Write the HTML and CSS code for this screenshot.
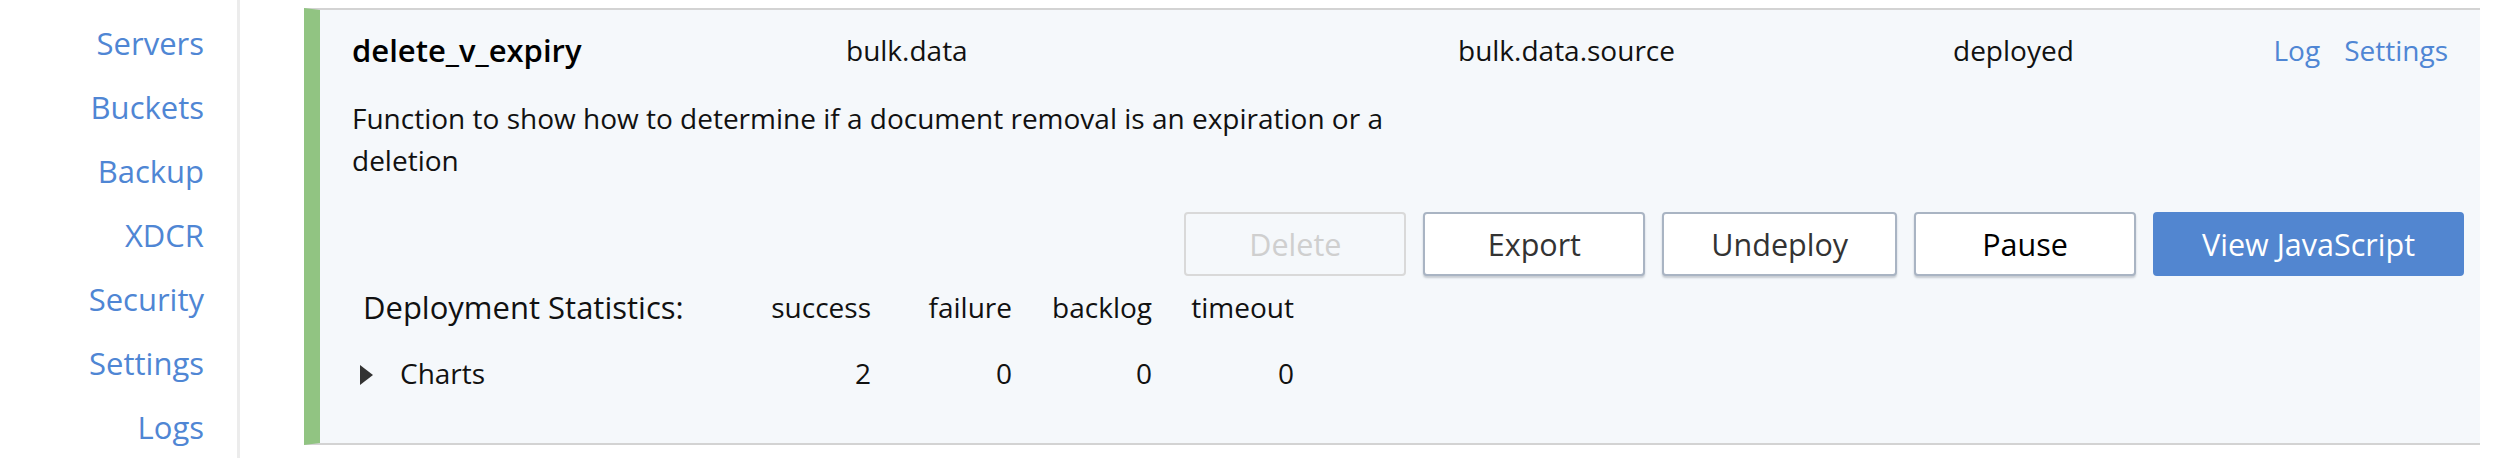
FILE: index.html
```html
<!DOCTYPE html>
<html lang="en">
<head>
<meta charset="utf-8">
<title>Eventing</title>
<link rel="stylesheet" href="styles.css">
</head>
<body>
<div class="app">
  <nav class="sidebar">
    <a class="nav-link" href="#">Servers</a>
    <a class="nav-link" href="#">Buckets</a>
    <a class="nav-link" href="#">Backup</a>
    <a class="nav-link" href="#">XDCR</a>
    <a class="nav-link" href="#">Security</a>
    <a class="nav-link" href="#">Settings</a>
    <a class="nav-link" href="#">Logs</a>
  </nav>
  <main class="main">
    <section class="card">
      <div class="card-head">
        <span class="fn-name">delete_v_expiry</span>
        <span class="cell">bulk.data</span>
        <span class="cell">bulk.data.source</span>
        <span class="cell">deployed</span>
        <span class="links"><a href="#">Log</a><a href="#">Settings</a></span>
      </div>
      <p class="desc">Function to show how to determine if a document removal is an expiration or a deletion</p>
      <div class="actions">
        <button class="btn btn-disabled" disabled>Delete</button>
        <button class="btn">Export</button>
        <button class="btn">Undeploy</button>
        <button class="btn btn-dark">Pause</button>
        <button class="btn btn-primary">View JavaScript</button>
      </div>
      <div class="stats">
        <span class="stats-label">Deployment Statistics:</span>
        <span class="num">success</span>
        <span class="num">failure</span>
        <span class="num">backlog</span>
        <span class="num">timeout</span>
        <span class="charts"><span class="caret"></span>Charts</span>
        <span class="num">2</span>
        <span class="num">0</span>
        <span class="num">0</span>
        <span class="num">0</span>
      </div>
    </section>
  </main>
</div>
</body>
</html>
```
FILE: styles.css
```css
* { box-sizing: border-box; }
html, body { margin: 0; padding: 0; background: #fff; }
body {
  font-family: "Open Sans", "Noto Sans", sans-serif;
  color: #111;
  width: 2512px;
  height: 458px;
  overflow: hidden;
}
.app {
  display: flex;
  height: 458px;
}
.sidebar {
  width: 240px;
  flex: none;
  border-right: 3px solid #ececec;
  display: flex;
  flex-direction: column;
  align-items: flex-end;
  padding: 11px 33px 0 0;
}
.nav-link {
  font-size: 31px;
  line-height: 64px;
  color: #4f86d4;
  text-decoration: none;
}
.main {
  flex: 1;
  padding: 8px 32px 0 64px;
}
.card {
  background: #f5f8fb;
  border-top: 2px solid #d3d3d3;
  border-bottom: 2px solid #d3d3d3;
  border-left: 16px solid #91c482;
  padding: 22px 16px 39px 32px;
}
.card-head {
  display: grid;
  grid-template-columns: 494px 612px 495px 1fr auto;
  align-items: center;
  font-size: 28px;
  line-height: 36px;
  padding-right: 16px;
}
.fn-name { font-size: 31px; font-weight: 600; color: #000; }
.links { display: flex; gap: 24px; }
.links a { color: #4f86d4; text-decoration: none; }
.desc {
  margin: 29px 0 0;
  width: 1106px;
  font-size: 28px;
  line-height: 42px;
}
.actions {
  display: flex;
  justify-content: flex-end;
  gap: 17px;
  margin-top: 31px;
}
.btn {
  font-family: inherit;
  font-size: 30.5px;
  height: 64px;
  min-width: 222px;
  padding: 0 47px;
  border: 2px solid #a9b4c3;
  border-radius: 4px;
  background: #fff;
  color: #333;
  box-shadow: 0 2px 2px rgba(60, 70, 90, 0.25);
}
.btn-dark { color: #000; }
.btn-disabled {
  background: transparent;
  border-color: #d9d9d9;
  color: #cfcfcf;
  box-shadow: none;
}
.btn-primary {
  background: #5286d0;
  border-color: #5286d0;
  color: #fff;
  box-shadow: none;
}
.stats {
  display: grid;
  grid-template-columns: 367px 141px 141px 140px 142px;
  grid-auto-rows: 62px;
  row-gap: 4px;
  align-items: center;
  margin-left: 11px;
  font-size: 28px;
  line-height: 40px;
}
.stats-label { font-size: 31px; }
.num { text-align: right; }
.charts {
  display: flex;
  align-items: center;
  margin-left: -3px;
}
.caret {
  width: 0;
  height: 0;
  border-top: 10px solid transparent;
  border-bottom: 10px solid transparent;
  border-left: 13px solid #333;
  margin: 4px 27px 0 0;
}
```
